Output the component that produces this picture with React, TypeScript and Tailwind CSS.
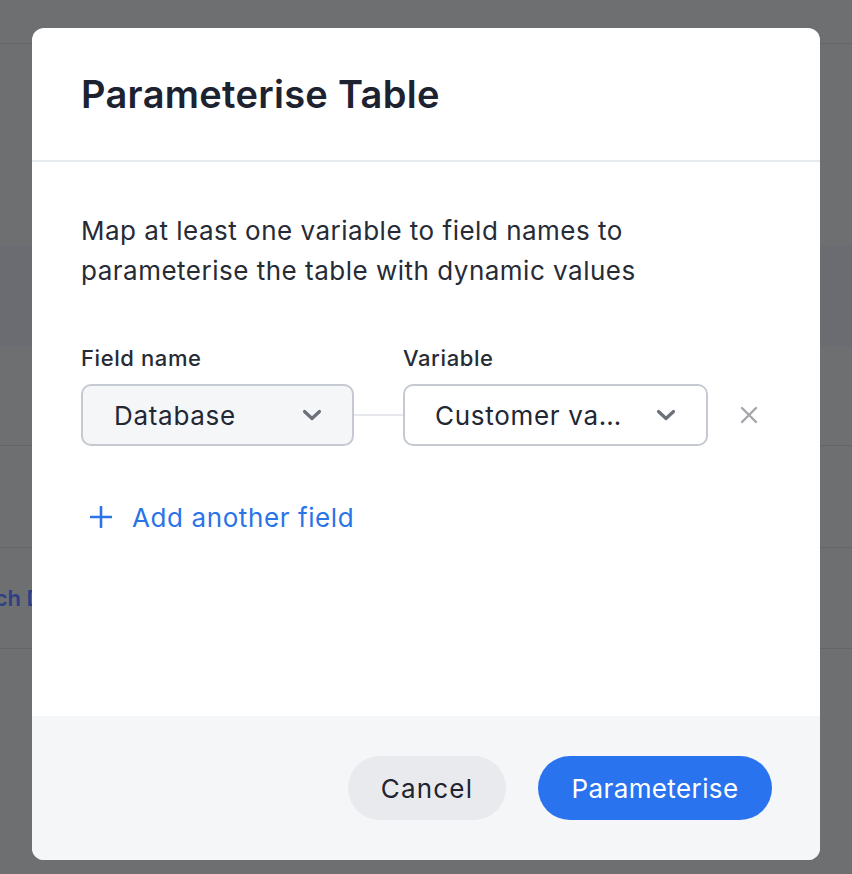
import React from "react";

function Chevron() {
  return (
    <svg width="20" height="12" viewBox="0 0 20 12" fill="none">
      <path d="M2.5 2.5 L10 9.5 L17.5 2.5" stroke="#6b7079" strokeWidth="3.2" strokeLinecap="round" strokeLinejoin="round" />
    </svg>
  );
}

export default function App() {
  return (
    <div
      className="relative w-[852px] h-[874px] overflow-hidden bg-[#6e6f71]"
      style={{ fontFamily: "Inter, 'Noto Sans', sans-serif" }}
    >
      {/* dimmed page behind */}
      <div className="flex flex-col w-full">
        <div className="h-[44px] border-b border-[#646567] bg-[#6e6f71]" />
        <div className="h-[202px]" />
        <div className="h-[100px] bg-[#6a6c71]" />
        <div className="h-[100px] border-b border-[#646567]" />
        <div className="h-[102px] border-b border-[#646567]" />
        <div className="h-[101px] border-b border-[#646567] flex items-center">
          <span className="ml-[-40px] whitespace-nowrap text-[22px] font-semibold text-[#2e3f86]">Batch Data</span>
        </div>
      </div>

      {/* modal */}
      <div className="absolute left-[32px] top-[28px] w-[788px] h-[832px] rounded-[12px] bg-white overflow-hidden flex flex-col">
        <div className="h-[134px] shrink-0 border-b-2 border-[#e6e9ed] flex items-center px-[49px]">
          <h1 className="text-[38px] font-semibold text-[#1d2230] tracking-[0.3px]">Parameterise Table</h1>
        </div>

        <div className="flex-1 px-[49px] pt-[49px]">
          <p className="text-[26px] leading-[40px] text-[#262b36] tracking-[0.5px]">
            Map at least one variable to field names to
            <br />
            parameterise the table with dynamic values
          </p>

          <div className="mt-[53px] flex items-end">
            <div className="flex flex-col">
              <span className="text-[22px] leading-[28px] font-medium text-[#262b36] mb-[12px] tracking-[0.6px]">Field name</span>
              <div className="w-[273px] h-[62px] rounded-[10px] border-2 border-[#c5cad2] bg-[#f4f6f8] flex items-center justify-between pl-[31px] pr-[30px]">
                <span className="text-[26px] text-[#222733] tracking-[0.7px]">Database</span>
                <Chevron />
              </div>
            </div>
            <div className="w-[49px] h-[62px] flex items-center">
              <div className="w-full h-[2px] bg-[#e6e8eb]" />
            </div>
            <div className="flex flex-col">
              <span className="text-[22px] leading-[28px] font-medium text-[#262b36] mb-[12px] tracking-[0.6px]">Variable</span>
              <div className="w-[305px] h-[62px] rounded-[10px] border-2 border-[#c5cad2] bg-white flex items-center justify-between pl-[30px] pr-[30px]">
                <span className="text-[26px] text-[#222733] tracking-[0.7px]">Customer va…</span>
                <Chevron />
              </div>
            </div>
            <div className="h-[62px] flex items-center pl-[32px]">
              <svg width="18" height="18" viewBox="0 0 18 18" fill="none">
                <path d="M2 2 L16 16 M16 2 L2 16" stroke="#a3a6ab" strokeWidth="2.4" strokeLinecap="round" />
              </svg>
            </div>
          </div>

          <div className="mt-[51px] flex items-center pl-[9px] h-[40px]">
            <svg width="22" height="22" viewBox="0 0 22 22" fill="none">
              <path d="M11 1 V21 M1 11 H21" stroke="#2a74e8" strokeWidth="2.6" strokeLinecap="round" />
            </svg>
            <span className="ml-[20px] text-[26px] text-[#2a74e8] tracking-[0.6px]">Add another field</span>
          </div>
        </div>

        <div className="h-[144px] shrink-0 bg-[#f5f6f8] flex items-center justify-end gap-[32px] pr-[48px]">
          <button className="w-[158px] h-[64px] rounded-full bg-[#e8eaee] text-[26px] text-[#1f2430] tracking-[1.2px]">Cancel</button>
          <button className="w-[234px] h-[64px] rounded-full bg-[#2a73ef] text-[26px] text-white tracking-[0.4px]">Parameterise</button>
        </div>
      </div>
    </div>
  );
}
